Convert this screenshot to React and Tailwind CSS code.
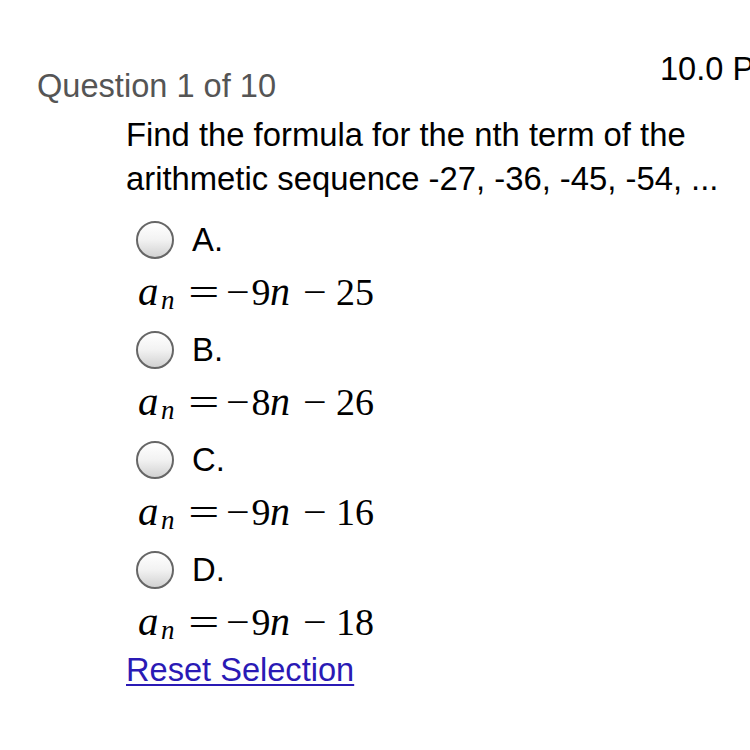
import React from "react";

function Radio({ label }) {
  return (
    <div className="flex h-[52px] items-center pl-[136px]">
      <div className="h-[38px] w-[38px] shrink-0 rounded-full border-2 border-[#666] bg-linear-to-b from-white via-[#f2f2f2] to-[#d2d2d2]" />
      <span className="ml-[18px] text-[32.8px] leading-[32px] text-black">{label}</span>
    </div>
  );
}

function Math({ coef, c }) {
  const serif = { fontFamily: '"Liberation Serif", "Times New Roman", serif' };
  return (
    <div
      className="mb-[12px] flex h-[46px] items-baseline whitespace-nowrap pl-[138px] pt-[4px] text-[38px] leading-[42px] text-black"
      style={serif}
    >
      <span className="inline-flex w-[23px] justify-start text-[41px] italic">a</span>
      <span className="relative top-[4px] inline-flex w-[19px] justify-start text-[27px] italic">n</span>
      <span className="inline-flex w-[48px] justify-center">
        <span className="inline-block scale-x-[1.45]">=</span>
      </span>
      <span className="inline-flex w-[20px] justify-center">
        <span className="inline-block scale-x-[1.1]">−</span>
      </span>
      <span className="ml-[4px] inline-flex w-[18px] justify-center">{coef}</span>
      <span className="inline-flex w-[20px] justify-center text-[40px] italic">n</span>
      <span className="inline-flex w-[50px] justify-center">
        <span className="inline-block scale-x-[1.1]">−</span>
      </span>
      <span className="inline-flex w-[30px] justify-center">{c}</span>
    </div>
  );
}

function Option({ label, coef, c }) {
  return (
    <div>
      <Radio label={label} />
      <Math coef={coef} c={c} />
    </div>
  );
}

export default function App() {
  return (
    <div
      className="relative h-[750px] w-[750px] overflow-hidden bg-white text-black"
      style={{ fontFamily: '"Liberation Sans", Arial, sans-serif' }}
    >
      <div className="flex items-start pt-[53px]">
        <div className="w-[660px] shrink-0 pl-[37px] pt-[17px] text-[32.6px] leading-[32px] text-[#555]">
          Question 1 of 10
        </div>
        <div className="shrink-0 whitespace-nowrap text-[32.6px] leading-[32px] text-black">10.0 Points</div>
      </div>
      <div className="mt-[11px] pl-[126px] text-[32.8px] leading-[44px] text-black">
        <div className="whitespace-nowrap">Find the formula for the nth term of the</div>
        <div className="whitespace-nowrap">arithmetic sequence -27, -36, -45, -54, ...</div>
      </div>
      <div className="mt-[13px]">
        <Option label="A." coef="9" c="25" />
        <Option label="B." coef="8" c="26" />
        <Option label="C." coef="9" c="16" />
        <Option label="D." coef="9" c="18" />
      </div>
      <div className="pl-[126px] text-[32.6px] leading-[32px]">
        <a href="#" className="text-[#2a1ab5] underline decoration-2 underline-offset-[3px]">
          Reset Selection
        </a>
      </div>
    </div>
  );
}
